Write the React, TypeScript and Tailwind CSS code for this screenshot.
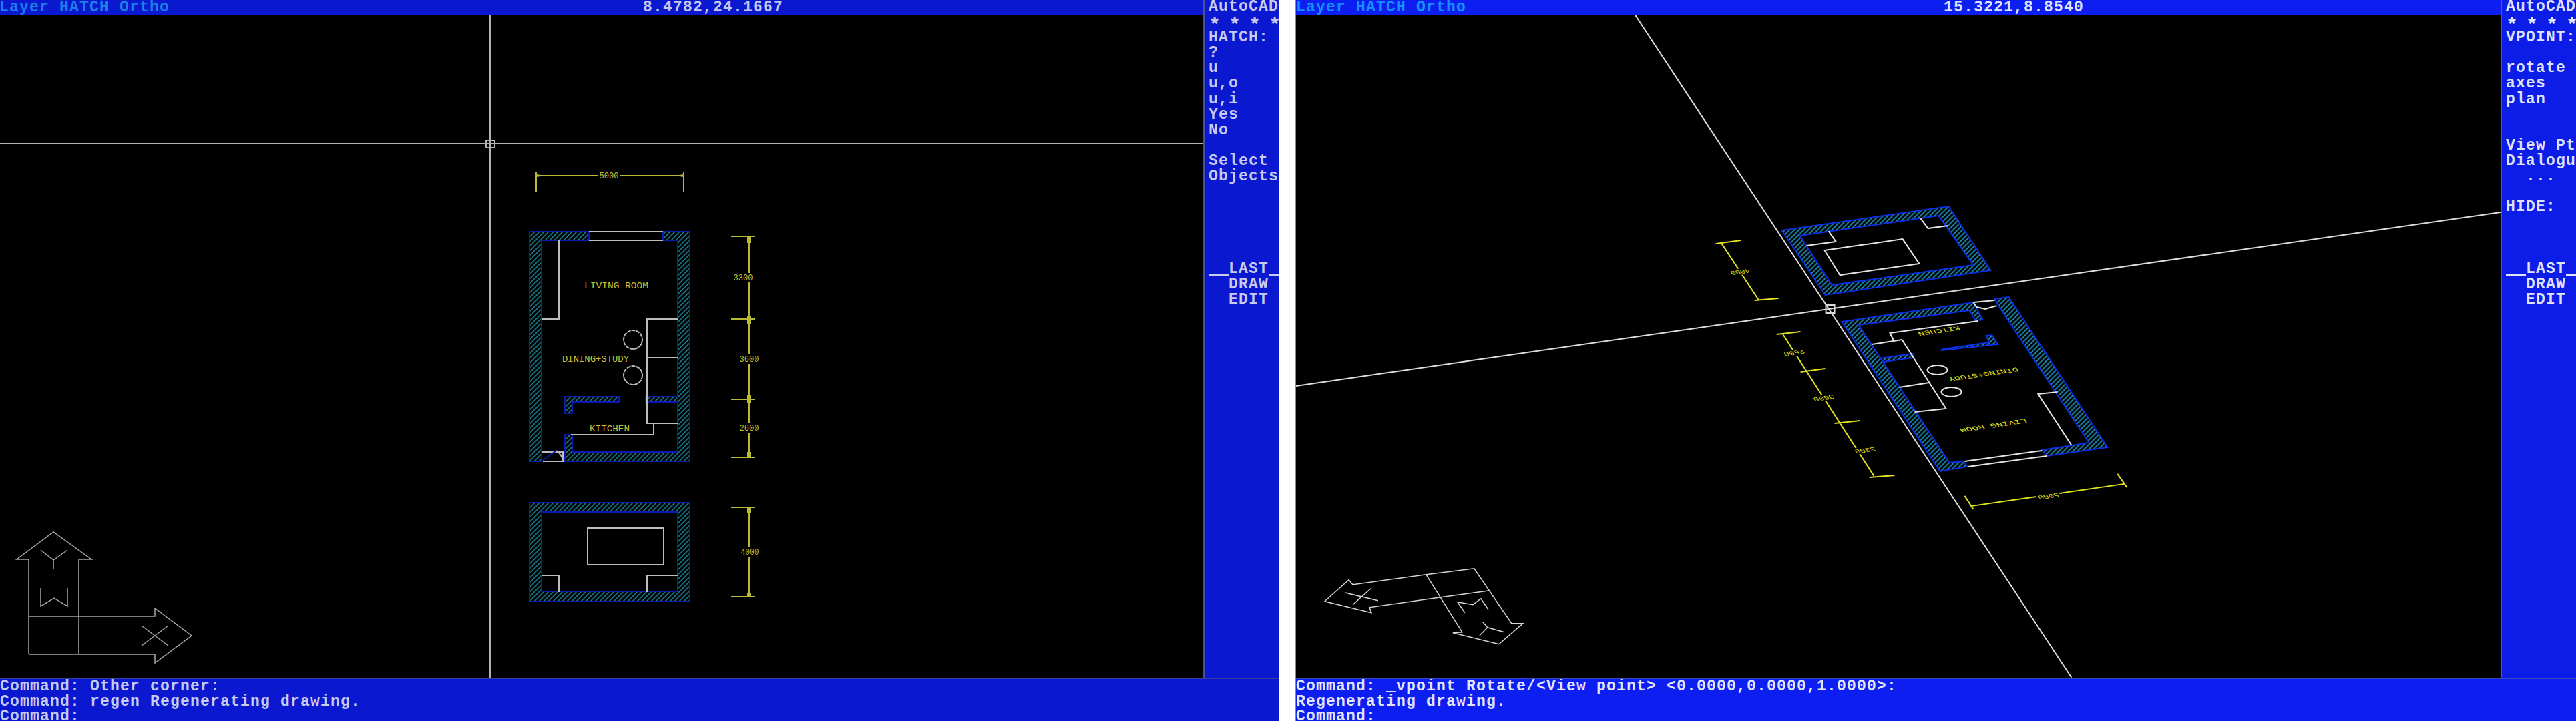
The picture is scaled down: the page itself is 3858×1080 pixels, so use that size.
import React from 'react';

const menuLeft = [
  'AutoCAD', '* * * *', 'HATCH:', '?', 'u', 'u,o', 'u,i', 'Yes', 'No', '',
  'Select', 'Objects', '', '', '', '', '', '__LAST_', '  DRAW', '  EDIT',
];

const menuRight = [
  'AutoCAD', '* * * *', 'VPOINT:', '', 'rotate', 'axes', 'plan', '', '',
  'View Pt', 'Dialogu', '  ...', '', 'HIDE:', '', '', '', '__LAST_', '  DRAW', '  EDIT',
];

// plan coordinates, the iso view reuses them through a matrix
const labels = [
  { t: 'LIVING ROOM', x: 923, y: 428, w: 96, gap: false },
  { t: 'DINING+STUDY', x: 892, y: 538, w: 100, gap: false },
  { t: 'KITCHEN', x: 913, y: 642, w: 60, gap: false },
  { t: '5000', x: 912, y: 263, w: 29, gap: true },
  { t: '3300', x: 1113, y: 416, w: 29, gap: true },
  { t: '3600', x: 1122, y: 538, w: 29, gap: true },
  { t: '2600', x: 1122, y: 641, w: 29, gap: true },
  { t: '4000', x: 1123, y: 827, w: 27, gap: true },
];

function Labels({ fill, transform }: { fill: string; transform?: string }) {
  return (
    <g transform={transform}>
      {labels.map((l) => (
        <g key={l.t}>
          {l.gap && <rect x={l.x - l.w / 2 - 2} y={l.y - 7} width={l.w + 4} height={14} fill="#000" />}
          <text
            x={l.x}
            y={l.y + 4}
            fontSize={13}
            fontWeight={400}
            letterSpacing={0}
            textAnchor="middle"
            textLength={l.w}
            lengthAdjust="spacingAndGlyphs"
            fill={fill}
          >
            {l.t}
          </text>
        </g>
      ))}
    </g>
  );
}

function Hatch({ id, color }: { id: string; color: string }) {
  return (
    <pattern id={id} patternUnits="userSpaceOnUse" width="7" height="7">
      <path d="M-1 8L8 -1M-1 1L1 -1M6 8L8 6" stroke={color} strokeWidth="1.6" />
    </pattern>
  );
}

function PlanDrawing() {
  const wall = { fill: 'url(#hatchL)', stroke: '#0c1ab4', strokeWidth: 2 };
  return (
    <svg className="block h-[993px] w-full" viewBox="0 22 1802 993">
      <defs>
        <Hatch id="hatchL" color="#17788c" />
      </defs>

      {/* walls */}
      <path d="M793 347H882V360H811V691H793Z" {...wall} />
      <path d="M993 347H1033V691H846V651H857V677H1015V360H993Z" {...wall} />
      <path d="M846 594H927V602H857V619H846Z" {...wall} />
      <path d="M967 594H1015V602H967Z" {...wall} />
      <path fillRule="evenodd" d="M793 753H1033V901H793ZM811 767H1015V886H811Z" {...wall} />

      {/* fittings */}
      <g fill="none" stroke="#bcbcbc" strokeWidth="2">
        <path d="M882 347H993M882 360H993" />
        <path d="M837 360V478H811" />
        <path d="M1015 478H969V634H1016M969 536H1015M979 634V651H855" />
        <path d="M812 677H843V691H813M833 675Q841 680 843 690" />
        <circle cx="948" cy="509" r="14" strokeDasharray="6 1" />
        <circle cx="948" cy="562" r="14" strokeDasharray="6 1" />
        <rect x="880" y="791" width="114" height="55" />
        <path d="M811 862H837V887M969 887V862H1015" />
      </g>
      <path d="M812 690L833 675" stroke="#0c1ab4" strokeWidth="2" />

      {/* dimensions */}
      <g fill="none" stroke="#b9b934" strokeWidth="2">
        <path d="M803 258V288M1024 258V288M803 263H1024" />
        <path d="M1122 354V685M1095 354H1131M1095 478H1131M1095 598H1131M1095 685H1131" />
        <path d="M1122 760V894M1095 760H1131M1095 894H1131" />
      </g>
      <g fill="#b9b934">
        <path d="M803 261L816 263L803 265ZM1024 261L1011 263L1024 265Z" />
        <rect x="1119" y="354" width="6" height="10" />
        <rect x="1119" y="473" width="6" height="12" />
        <rect x="1119" y="592" width="6" height="12" />
        <rect x="1119" y="677" width="6" height="8" />
        <rect x="1119" y="760" width="6" height="8" />
        <rect x="1119" y="888" width="6" height="6" />
      </g>
      <Labels fill="#c4c43a" />

      {/* crosshair */}
      <g fill="none" stroke="#b4b4b4" strokeWidth="2">
        <path d="M0 215H1802M734 22V1015" />
        <rect x="728" y="210" width="13" height="11" />
      </g>

      {/* ucs icon */}
      <g fill="none" stroke="#a6a6a6" strokeWidth="1.5">
        <path d="M43 980V838H25L80 797L137 838H118V980" />
        <path d="M43 923H232V911L287 952L232 993V980H43" />
        <path d="M61 824L80 839L101 824M80 839V853" />
        <path d="M61 881V908L81 896L101 908V881" />
        <path d="M212 937L252 967M252 937L212 967" />
      </g>
    </svg>
  );
}

function IsoDrawing() {
  const wall = { fill: 'url(#hatchR)', stroke: '#0b2ee6', strokeWidth: 2 };
  return (
    <svg className="block h-[993px] w-full" viewBox="1940 22 1805 993">
      <defs>
        <Hatch id="hatchR" color="#1d9cc4" />
      </defs>

      {/* axes */}
      <g fill="none" stroke="#dcdcdc" strokeWidth="2">
        <path d="M2448 22L3102 1015M1940 578L3745 318" />
        <rect x="2734" y="457" width="13" height="12" />
      </g>

      {/* walls */}
      <path fillRule="evenodd" d="M2668 345L2918 309L2981 405L2733 442ZM2695 353L2903 323L2955 397L2743 427Z" {...wall} />
      <path d="M2758 482L2955 453L2969 479L2958 480L2949 465L2783 487L2919 693L2940 691L2946 699L2905 706Z" {...wall} />
      <path d="M2987 448L3008 445L3156 670L3065 683L3058 674L3128 663L2992 457Z" {...wall} />
      <path d="M2906 525L2992 516L2983 502L2974 503L2979 513L2910 523Z" {...wall} />
      <path d="M2815 537L2864 530L2865 536L2821 542Z" {...wall} />

      {/* fittings */}
      <g fill="none" stroke="#e4e4e4" strokeWidth="2">
        <path d="M2732 375L2849 358L2874 395L2755 412Z" />
        <path d="M2738 346L2749 362L2705 368M2876 327L2887 342L2917 338" />
        <path d="M2803 516L2848 509L2914 612L2867 617M2844 580L2889 573" />
        <path d="M2835 509L2830 499L2962 481" />
        <path d="M3081 587L3052 590L3102 667" />
        <path d="M2942 691L3058 675M2947 699L3065 683" />
        <path d="M2955 453L2987 450M2955 453L2960 460L2973 463L2990 458" />
        <ellipse cx="2901" cy="554" rx="15" ry="7" />
        <ellipse cx="2922" cy="587" rx="15" ry="7" />
      </g>

      {/* dimensions */}
      <g fill="none" stroke="#e2e21e" strokeWidth="2">
        <path d="M2578 365L2633 449M2569 365L2607 360M2627 450L2663 447" />
        <path d="M2669 500L2806 713M2660 501L2696 497M2696 557L2733 552M2747 634L2785 630M2799 715L2837 712" />
        <path d="M2953 758L3181 725M2942 743L2955 763M3171 710L3185 730" />
      </g>
      <Labels fill="#e2e21e" transform="matrix(-1.04 .154 -.43 -.654 4129 775)" />

      {/* ucs icon */}
      <g fill="none" stroke="#d6d6d6" strokeWidth="1.5">
        <path d="M2135 861L2025 876L2019 869L1983 901L2053 918L2050 910L2157 895L2230 885" />
        <path d="M2135 861L2207 852L2263 934H2280L2244 965L2175 948L2189 947L2135 861" />
        <path d="M2013 888L2063 900M2052 882L2025 906" />
        <path d="M2193 918L2182 902L2205 906L2217 897L2228 913" />
        <path d="M2220 932L2227 940L2252 947M2227 940L2215 952" />
      </g>
    </svg>
  );
}

function MenuLines({ lines }: { lines: string[] }) {
  return (
    <div className="-mt-[1px]">
      {lines.map((line, i) => {
        if (line === '__LAST_') {
          return (
            <div key={i} className="flex h-[23.1px]">
              <span className="h-[21px] w-[30px] border-b-2 border-current" />
              <span>LAST</span>
              <span className="h-[21px] w-[15px] border-b-2 border-current" />
            </div>
          );
        }
        if (line === '* * * *') {
          // the asterisk sits mid-line on the VGA font
          return (
            <div key={i} className="h-[23.1px] translate-y-[6px] text-[30px] tracking-[-3px]">
              {line}
            </div>
          );
        }
        return (
          <div key={i} className="h-[23.1px]">
            {line}
          </div>
        );
      })}
    </div>
  );
}

export default function App() {
  return (
    <div className="flex h-[1080px] w-[3858px] overflow-hidden bg-white font-['Liberation_Mono',monospace] text-[23px] font-bold tracking-[1.2px] whitespace-pre">
      {/* left viewport */}
      <div className="flex w-[1915px] flex-col">
        <div className="flex min-h-0 flex-1">
          <div className="flex w-[1802px] flex-col bg-black">
            <div className="flex h-[22px] bg-[#0a18cf] leading-[22px]">
              <div className="-ml-[1px] w-[964px] text-[#1c7fe8]">Layer HATCH Ortho</div>
              <div className="text-[#c4c8ec]">8.4782,24.1667</div>
            </div>
            <PlanDrawing />
          </div>
          <div className="w-[113px] overflow-hidden border-l-2 border-[#46509c] bg-[#0a18cf] pl-[6px] leading-[23px] text-[#c8cbee]">
            <MenuLines lines={menuLeft} />
          </div>
        </div>
        <div className="h-[65px] overflow-hidden border-t-2 border-[#36409f] bg-[#0a18cf] leading-[22.5px] text-[#c8cbee]">
          <div>Command: Other corner:</div>
          <div>Command: regen Regenerating drawing.</div>
          <div>Command:</div>
        </div>
      </div>

      <div className="w-[25px]" />

      {/* right viewport */}
      <div className="flex flex-1 flex-col border-l border-[#8a8a8a]">
        <div className="flex min-h-0 flex-1">
          <div className="flex w-[1804px] flex-col bg-black">
            <div className="flex h-[22px] bg-[#0c1ff0] leading-[22px]">
              <div className="w-[970px] text-[#1790ff]">Layer HATCH Ortho</div>
              <div className="text-[#dfe2fb]">15.3221,8.8540</div>
            </div>
            <IsoDrawing />
          </div>
          <div className="flex-1 overflow-hidden border-l-2 border-[#4a58b8] bg-[#0b1de6] pl-[6px] leading-[23px] text-[#dfe2fb]">
            <MenuLines lines={menuRight} />
          </div>
        </div>
        <div className="h-[65px] overflow-hidden border-t-2 border-[#3a48c0] bg-[#0c1ff0] leading-[22.5px] text-[#e4e6fc]">
          <div>{'Command: _vpoint Rotate/<View point> <0.0000,0.0000,1.0000>:'}</div>
          <div>Regenerating drawing.</div>
          <div>Command:</div>
        </div>
      </div>
    </div>
  );
}
